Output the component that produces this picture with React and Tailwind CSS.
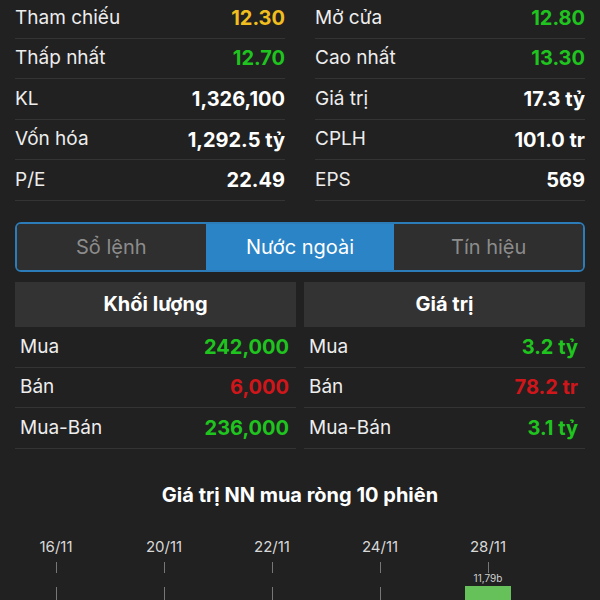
import React from 'react';

const left = [
  { label: 'Tham chiếu', value: '12.30', color: 'text-[#f0be1e]' },
  { label: 'Thấp nhất', value: '12.70', color: 'text-[#1fc41f]' },
  { label: 'KL', value: '1,326,100', color: 'text-white' },
  { label: 'Vốn hóa', value: '1,292.5 tỷ', color: 'text-white' },
  { label: 'P/E', value: '22.49', color: 'text-white' },
];

const right = [
  { label: 'Mở cửa', value: '12.80', color: 'text-[#1fc41f]' },
  { label: 'Cao nhất', value: '13.30', color: 'text-[#1fc41f]' },
  { label: 'Giá trị', value: '17.3 tỷ', color: 'text-white' },
  { label: 'CPLH', value: '101.0 tr', color: 'text-white' },
  { label: 'EPS', value: '569', color: 'text-white' },
];

const volume = [
  { label: 'Mua', value: '242,000', color: 'text-[#1fc41f]' },
  { label: 'Bán', value: '6,000', color: 'text-[#d0161a]' },
  { label: 'Mua-Bán', value: '236,000', color: 'text-[#1fc41f]' },
];

const amount = [
  { label: 'Mua', value: '3.2 tỷ', color: 'text-[#1fc41f]' },
  { label: 'Bán', value: '78.2 tr', color: 'text-[#d0161a]' },
  { label: 'Mua-Bán', value: '3.1 tỷ', color: 'text-[#1fc41f]' },
];

const dates = ['16/11', '20/11', '22/11', '24/11', '28/11'];

const StatRow = ({ row }) => (
  <div className="flex h-[40.6px] items-center justify-between border-b border-[#343434]">
    <span className="text-[19px] text-[#ededed]">{row.label}</span>
    <span className={`text-[20px] font-bold ${row.color}`}>{row.value}</span>
  </div>
);

const FlowRow = ({ row }) => (
  <div className="flex h-[40.6px] items-center justify-between border-b border-[#343434] pl-[5px] pr-[7px]">
    <span className="text-[19px] text-[#ededed]">{row.label}</span>
    <span className={`text-[20px] font-bold ${row.color}`}>{row.value}</span>
  </div>
);

const Tick = ({ date, last }) => (
  <div className="flex w-[60px] flex-col items-center">
    <span className="text-[15px] leading-[18px] text-[#d8d8d8]">{date}</span>
    <div className="mt-[6px] h-[11px] w-px bg-[#777]" />
    {last ? (
      <>
        <span className="mt-[-1px] text-[10px] leading-[12px] text-[#cfcfcf]">11,79b</span>
        <div className="mt-[2px] h-[14px] w-[46px] bg-[#66c15a]" />
      </>
    ) : (
      <div className="mt-[14px] h-[14px] w-px bg-[#777]" />
    )}
  </div>
);

export default function App() {
  return (
    <div className="h-[600px] w-[600px] overflow-hidden bg-[#212121] font-['Inter',sans-serif]">
      <div className="-mt-[2px] grid grid-cols-2 gap-x-[30px] px-[15px]">
        <div>{left.map((r) => <StatRow key={r.label} row={r} />)}</div>
        <div>{right.map((r) => <StatRow key={r.label} row={r} />)}</div>
      </div>

      <div className="mx-[15px] mt-[21px] flex h-[50px] overflow-hidden rounded-[6px] border-2 border-[#2b7cb9] text-[20px]">
        <div className="flex flex-1 items-center justify-center bg-[#2f2f2f] text-[#8c8c8c]">Sổ lệnh</div>
        <div className="flex flex-1 items-center justify-center bg-[#2a84c6] text-white">Nước ngoài</div>
        <div className="flex flex-1 items-center justify-center bg-[#2f2f2f] text-[#8c8c8c]">Tín hiệu</div>
      </div>

      <div className="mt-[10px] grid grid-cols-2 gap-x-[8px] px-[15px]">
        <div>
          <div className="flex h-[45px] items-center justify-center bg-[#333333] text-[20px] font-bold text-white">Khối lượng</div>
          {volume.map((r) => <FlowRow key={r.label} row={r} />)}
        </div>
        <div>
          <div className="flex h-[45px] items-center justify-center bg-[#333333] text-[20px] font-bold text-white">Giá trị</div>
          {amount.map((r) => <FlowRow key={r.label} row={r} />)}
        </div>
      </div>

      <div className="mt-[34px] text-center text-[20px] font-bold leading-[24px] text-white">Giá trị NN mua ròng 10 phiên</div>

      <div className="mt-[31px] flex gap-[48px] pl-[26px]">
        {dates.map((d, i) => <Tick key={d} date={d} last={i === dates.length - 1} />)}
      </div>
    </div>
  );
}
